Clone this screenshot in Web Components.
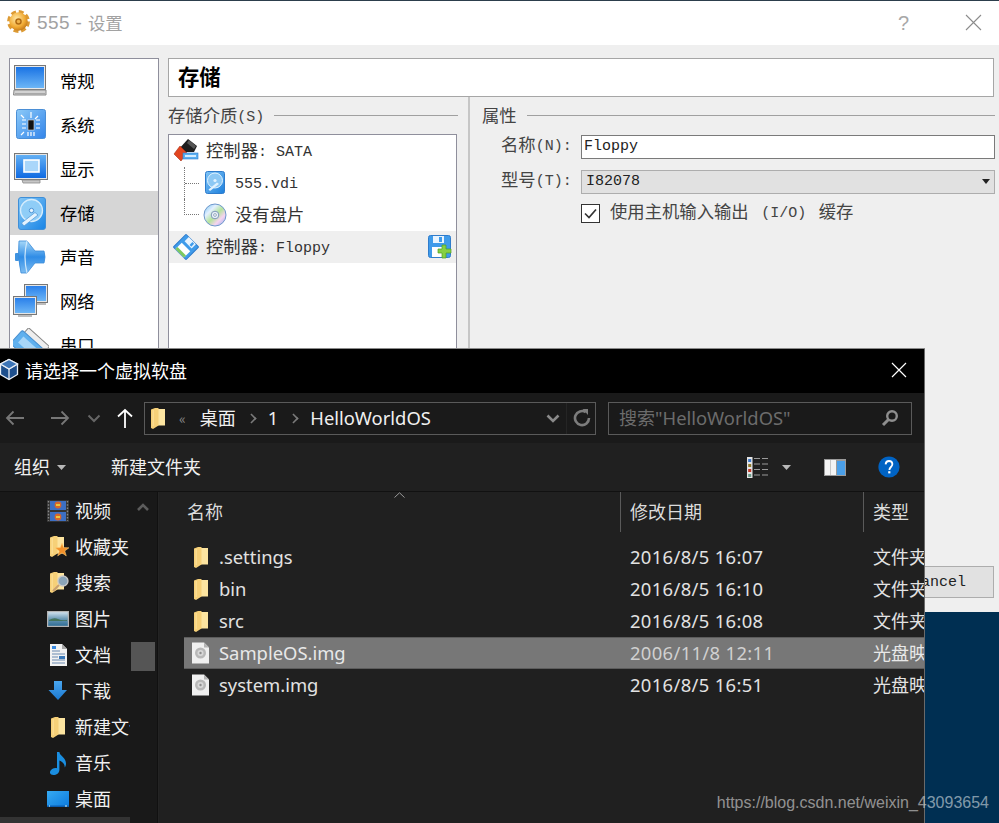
<!DOCTYPE html>
<html lang="zh">
<head>
<meta charset="utf-8">
<title>555 - 设置</title>
<style>
  html, body { margin: 0; height: 100%; overflow: hidden; background: #002f52; }
  body { position: relative; font-family: "Noto Sans CJK SC", sans-serif; text-autospace: no-autospace; }
</style>
</head>
<body>
<settings-window>
  <nav-item icon="laptop">常规</nav-item>
  <nav-item icon="chip">系统</nav-item>
  <nav-item icon="monitor">显示</nav-item>
  <nav-item icon="hdd" selected>存储</nav-item>
  <nav-item icon="speaker">声音</nav-item>
  <nav-item icon="network">网络</nav-item>
  <nav-item icon="serial">串口</nav-item>

  <tree-row slot="tree" icon="sata">控制器<mono-text>: SATA</mono-text></tree-row>
  <tree-row slot="tree" icon="vdi" child><mono-text>555.vdi</mono-text></tree-row>
  <tree-row slot="tree" icon="cd" child last>没有盘片</tree-row>
  <tree-row slot="tree" icon="floppy" selected action="floppyadd">控制器<mono-text>: Floppy</mono-text></tree-row>
</settings-window>

<file-dialog>
  <side-link icon="film">视频</side-link>
  <side-link icon="starfolder">收藏夹</side-link>
  <side-link icon="searchfolder">搜索</side-link>
  <side-link icon="picture">图片</side-link>
  <side-link icon="doc">文档</side-link>
  <side-link icon="download">下载</side-link>
  <side-link icon="folder">新建文件夹</side-link>
  <side-link icon="note">音乐</side-link>
  <side-link icon="desktop">桌面</side-link>

  <file-row slot="files" icon="folder" name=".settings" date="2016/8/5 16:07" type="文件夹"></file-row>
  <file-row slot="files" icon="folder" name="bin" date="2016/8/5 16:10" type="文件夹"></file-row>
  <file-row slot="files" icon="folder" name="src" date="2016/8/5 16:08" type="文件夹"></file-row>
  <file-row slot="files" icon="disc" name="SampleOS.img" date="2006/11/8 12:11" type="光盘映像文件" selected></file-row>
  <file-row slot="files" icon="disc" name="system.img" date="2016/8/5 16:51" type="光盘映像文件"></file-row>
</file-dialog>

<water-mark>https://blog.csdn.net/weixin_43093654</water-mark>

<script>
const folderShape = `
  <path d="M5 1h9v16.5H5z" fill="#fce4a0"/>
  <path d="M0 1.5 4 0h3.5v17.5L2 21 0 20z" fill="#f6d078"/>
  <path d="M1.5 2H3v16H1.5z" fill="#fbdc90"/>`;

// every icon is drawn on its own little canvas, sized to the reference
const ICONS = {
  gear: `<svg width="23" height="23" viewBox="0 0 24 24"><defs><radialGradient id="gg" cx=".4" cy=".35" r=".75"><stop offset="0" stop-color="#ffe8a6"/><stop offset=".6" stop-color="#f1aa33"/><stop offset="1" stop-color="#b46810"/></radialGradient></defs>
    <circle cx="12" cy="12" r="10" fill="none" stroke="#dc9a34" stroke-width="3.8" stroke-dasharray="5 2.85"/>
    <circle cx="12" cy="12" r="9.6" fill="url(#gg)"/>
    <circle cx="12" cy="12" r="3.4" fill="#b06a12"/><circle cx="12" cy="12" r="1.8" fill="#eeb24a"/></svg>`,
  laptop: `<svg width="36" height="32" viewBox="0 0 36 32"><defs><linearGradient id="lg" x2="0" y2="1"><stop offset="0" stop-color="#1a73e4"/><stop offset="1" stop-color="#6db6f6"/></linearGradient></defs>
    <rect x="1.5" y=".5" width="31" height="24" fill="#e8e8e8" stroke="#777"/><rect x="3" y="2" width="28" height="21" fill="url(#lg)"/>
    <path d="M1 25h32v5H.5z" fill="#d2d2d2" stroke="#8a8a8a"/><path d="M2 28h30v1.5H2z" fill="#a8a8a8"/></svg>`,
  chip: `<svg width="36" height="32" viewBox="0 0 36 32"><defs><linearGradient id="cg" x2="1" y2="1"><stop offset="0" stop-color="#8ccaf8"/><stop offset="1" stop-color="#3284ea"/></linearGradient></defs>
    <rect x="3.5" y=".5" width="29" height="29" rx="2" fill="url(#cg)" stroke="#4b8fd6"/>
    <rect x="15" y="11" width="6" height="10" fill="#111" stroke="#ddd" stroke-width=".6"/>
    <path d="M18 3v6M9 11h4M9 15h4M9 19h4M23 11h4M23 15h4M23 19h4M15 23v4M18 23v4M21 23v4M11 9l-3-3M25 7l-3 3M8 26l3-3" stroke="#fff" stroke-width="1.2"/></svg>`,
  monitor: `<svg width="36" height="32" viewBox="0 0 36 32"><defs><linearGradient id="mg" x2="0" y2="1"><stop offset="0" stop-color="#63b0f4"/><stop offset="1" stop-color="#0f6ae2"/></linearGradient></defs>
    <rect x="1.5" y=".5" width="33" height="26" fill="#e6e6e6" stroke="#777"/><rect x="3" y="2" width="30" height="23" fill="url(#mg)"/>
    <rect x="11" y="7" width="15" height="12" fill="#a9d6fa" stroke="#fff" stroke-width="1.6"/>
    <path d="M9 27h18v3H10z" fill="#c6c6c6" stroke="#8c8c8c" stroke-width=".8"/></svg>`,
  hdd: `<svg width="32" height="36" viewBox="0 0 32 36"><defs><linearGradient id="hg" x2="1" y2="1"><stop offset="0" stop-color="#86c8f6"/><stop offset="1" stop-color="#1784e6"/></linearGradient></defs>
    <rect x="3.5" y="2.5" width="27" height="32" rx="2.5" fill="url(#hg)" stroke="#3f8fd8"/>
    <circle cx="16.5" cy="15.5" r="11" fill="#8fcdf7" stroke="#d5ecfc" stroke-width="1.3"/>
    <circle cx="16.5" cy="15.5" r="2.2" fill="#e4f3fe" stroke="#4b93d6"/>
    <path d="M23 20 9 31l-2.5-3L20 17.5z" fill="#e4f3fe" stroke="#4b93d6" stroke-width=".7"/></svg>`,
  speaker: `<svg width="36" height="34" viewBox="0 0 36 34"><defs><linearGradient id="sg" x2="0" y2="1"><stop offset="0" stop-color="#a6d8f8"/><stop offset=".5" stop-color="#2f8ce6"/><stop offset="1" stop-color="#7dbdf2"/></linearGradient></defs>
    <rect x="2" y="13" width="4" height="8" rx="1" fill="#3f93e0"/>
    <path d="M6 1h8l8 10h9q2 6 0 12h-9L14 33H8Q4 17 6 1z" fill="url(#sg)" stroke="#3b8bd8" stroke-width=".8"/>
    <path d="M14 1q-4 16 0 32" fill="none" stroke="#cfe8fb" stroke-width="1.2"/></svg>`,
  network: `<svg width="36" height="34" viewBox="0 0 36 34"><defs><linearGradient id="ng" x2="0" y2="1"><stop offset="0" stop-color="#2a80ea"/><stop offset="1" stop-color="#6db6f6"/></linearGradient></defs>
    <rect x="11.5" y=".5" width="23" height="18" fill="#e6e6e6" stroke="#777"/><rect x="13" y="2" width="20" height="15" fill="url(#ng)"/>
    <path d="M24 19h9v2H24z" fill="#bdbdbd"/>
    <rect x=".5" y="12.5" width="23" height="18" fill="#e6e6e6" stroke="#777"/><rect x="2" y="14" width="20" height="15" fill="url(#ng)"/>
    <path d="M5 31h14v2H5z" fill="#bdbdbd"/></svg>`,
  serial: `<svg width="36" height="34" viewBox="0 0 36 34"><g transform="rotate(42 18 18)">
    <rect x="4" y="6" width="28" height="8" fill="#eee" stroke="#888"/><rect x="1" y="12" width="34" height="18" rx="2" fill="#5fb0ee" stroke="#4a90d0"/><rect x="6" y="16" width="24" height="8" fill="#a8d6f8"/></g></svg>`,

  sata: `<svg width="26" height="26" viewBox="0 0 26 26">
    <path d="M5 12 15 1l9 7-3 6H10z" fill="#1e1e1e"/><path d="M16 2l7 6-2 3-7-6z" fill="#555"/>
    <path d="M7 8l7 7-6 8-7-7z" fill="#e2451f" stroke="#a82c10" stroke-width=".6"/>
    <rect x="10" y="15" width="15" height="6" fill="#5aaef0" stroke="#2f7ccc" stroke-width=".6"/><rect x="12" y="17" width="11" height="2" fill="#d4ecff"/></svg>`,
  vdi: `<svg width="24" height="24" viewBox="0 0 24 24"><defs><linearGradient id="vg" x2="1" y2="1"><stop offset="0" stop-color="#7fc4f6"/><stop offset="1" stop-color="#1c7fdc"/></linearGradient></defs>
    <rect x="2.5" y=".5" width="19" height="22" rx="2" fill="url(#vg)" stroke="#2f7ccc"/>
    <circle cx="12" cy="9.5" r="7.5" fill="#8cc8f4" stroke="#e0f2ff"/><circle cx="12" cy="9.5" r="1.6" fill="#e0f2ff"/>
    <path d="M16 13 7 20l-1.5-1.5L14 11.5z" fill="#e0f2ff"/></svg>`,
  cd: `<svg width="24" height="24" viewBox="0 0 24 24"><defs><linearGradient id="dg" x2="1" y2="1"><stop offset="0" stop-color="#6fc2ee"/><stop offset=".3" stop-color="#e4f0ff"/><stop offset=".52" stop-color="#b4e49c"/><stop offset=".72" stop-color="#f6d4f0"/><stop offset="1" stop-color="#86a8ee"/></linearGradient></defs>
    <circle cx="12" cy="12" r="11" fill="url(#dg)" stroke="#6f98cc"/><circle cx="12" cy="12" r="3.8" fill="#e8f0f8" stroke="#7f98b8"/><circle cx="12" cy="12" r="1.4" fill="#fff" stroke="#5c7898" stroke-width=".6"/></svg>`,
  floppy: `<svg width="26" height="26" viewBox="0 0 26 26"><g transform="rotate(45 13 13)">
    <rect x="4" y="4" width="18" height="18" rx="1" fill="#3f9bea" stroke="#2f7ccc"/><rect x="8" y="4" width="10" height="6" fill="#e8f4ff"/><rect x="14" y="5" width="2.5" height="4" fill="#3f9bea"/>
    <rect x="7" y="13" width="12" height="9" fill="#fff"/><rect x="7" y="19" width="12" height="3" fill="#7cc860"/></g></svg>`,
  floppyadd: `<svg width="24" height="24" viewBox="0 0 24 24">
    <path d="M.5 2.5q0-2 2-2h18q2 0 2 2v18q0 2-2 2h-18q-2 0-2-2z" fill="#3f9bea" stroke="#2f7ccc"/>
    <rect x="5" y="1" width="11" height="7" fill="#e8f4ff"/><rect x="11" y="2" width="3" height="5" fill="#3f9bea"/><rect x="4" y="12" width="13" height="10" fill="#fff"/>
    <path d="M14 10h4v4h5v4h-5v5h-4v-5h-4v-4h4z" fill="#86d044" stroke="#4f9e22" stroke-width=".7"/></svg>`,

  cube: `<svg width="19" height="23" viewBox="0 0 19 23">
    <path d="M9 1.5 17.5 6v10.5L9 21.5.5 16.5V6z" fill="#1e4f8c" stroke="#e8eef6" stroke-width="1.3"/>
    <path d="M.5 6 9 11l8.5-5M9 11v10.5" fill="none" stroke="#e8eef6" stroke-width="1.3"/><path d="M9 1.5 17.5 6 9 11 .5 6z" fill="#3c75b8" stroke="#e8eef6" stroke-width="1.3"/></svg>`,
  back: `<svg width="20" height="16" viewBox="0 0 20 16"><path d="M19 8H2M8.5 1.5 2 8l6.5 6.5" fill="none" stroke="#777" stroke-width="1.8"/></svg>`,
  forward: `<svg width="20" height="16" viewBox="0 0 20 16"><path d="M1 8h17M11.5 1.5 18 8l-6.5 6.5" fill="none" stroke="#777" stroke-width="1.8"/></svg>`,
  chevdown: `<svg width="14" height="9" viewBox="0 0 14 9"><path d="M1.5 1.5 7 7l5.5-5.5" fill="none" stroke="#666" stroke-width="2"/></svg>`,
  chevdownb: `<svg width="14" height="9" viewBox="0 0 14 9"><path d="M1.5 1.5 7 7l5.5-5.5" fill="none" stroke="#8a8a8a" stroke-width="2.6"/></svg>`,
  up: `<svg width="16" height="20" viewBox="0 0 16 20"><path d="M8 20V2M1 8.5 8 2l7 6.5" fill="none" stroke="#fff" stroke-width="1.8"/></svg>`,
  refresh: `<svg width="18" height="18" viewBox="0 0 18 18"><path d="M12.8 3.2A7 7 0 1 0 16 9" fill="none" stroke="#7c7c7c" stroke-width="2.6"/><path d="M9.5 0H15v6z" fill="#7c7c7c"/></svg>`,
  glass: `<svg width="18" height="18" viewBox="0 0 18 18"><circle cx="11" cy="7" r="4.8" fill="none" stroke="#8e8e8e" stroke-width="2.4"/><path d="M7.5 10.5 2 16" stroke="#8e8e8e" stroke-width="3"/></svg>`,
  view: `<svg width="22" height="21" viewBox="0 0 22 21"><rect width="5.5" height="21" fill="#e4e4e4"/><rect x="1.2" y="2" width="3" height="3" fill="#3c78c8"/><rect x="1.2" y="7" width="3" height="3" fill="#8f7b2c"/><rect x="1.2" y="12" width="3" height="3" fill="#c03828"/><rect x="1.2" y="17" width="3" height="3" fill="#6a9a88"/>
    <path d="M7 1.5h6M15 1.5h6M7 7h6M15 7h6M7 12.5h6M15 12.5h6M7 18h6M15 18h6" stroke="#9a9a9a"/></svg>`,
  pane: `<svg width="22" height="17" viewBox="0 0 22 17"><rect width="22" height="17" fill="#9a9a9a"/><rect x="1" y="1" width="5" height="15" fill="#f4f4f4"/><rect x="6.5" y="1" width="5.5" height="15" fill="#f4f4f4"/><rect x="13" y="2" width="8" height="14" fill="#4a9fe8"/></svg>`,
  help: `<svg width="22" height="22" viewBox="0 0 22 22"><circle cx="11" cy="11" r="10.6" fill="#0063c4"/><path d="M7.6 8.4Q7.8 5 11 5t3.4 3c0 3-3 3-3 6" fill="none" stroke="#fff" stroke-width="1.8"/><rect x="10.2" y="15.2" width="2.2" height="2.2" fill="#fff"/></svg>`,
  carettiny: `<svg width="9" height="5" viewBox="0 0 9 5"><path d="M0 0h9L4.5 5z" fill="#b8b8b8"/></svg>`,
  sort: `<svg width="11" height="6" viewBox="0 0 11 6"><path d="M.5 5.5 5.5.8l5 4.7" fill="none" stroke="#9a9a9a"/></svg>`,
  scrollup: `<svg width="12" height="8" viewBox="0 0 12 8"><path d="M1 7 6 2l5 5" fill="none" stroke="#5c5c5c" stroke-width="2.6"/></svg>`,

  film: `<svg width="22" height="22" viewBox="0 0 22 22"><rect width="22" height="22" fill="#333"/><rect x="3" y="1" width="16" height="9" fill="#3d6fc4"/><rect x="3" y="12" width="16" height="9" fill="#3d6fc4"/>
    <circle cx="11" cy="5" r="3.4" fill="#d8662c"/><circle cx="11" cy="17" r="3.4" fill="#d8662c"/><rect x="9" y="4" width="4" height="2" fill="#e8c83e"/><rect x="9" y="16" width="4" height="2" fill="#e8c83e"/>
    <path d="M1.5 1v20M20.5 1v20" stroke="#888" stroke-width="1.4" stroke-dasharray="1.6 1.6"/></svg>`,
  folder: `<svg width="14" height="21" viewBox="0 0 14 21">${folderShape}</svg>`,
  starfolder: `<svg width="22" height="22" viewBox="0 0 22 22"><g transform="translate(3)">${folderShape}</g><path d="M13 6l1.7 4.6 5.3.2-4.2 3.1 1.5 5-4.3-3-4.3 3 1.5-5-4.2-3.1 5.3-.2z" transform="translate(2 1)" fill="#f2902a" stroke="#ffd27a" stroke-width=".5"/></svg>`,
  searchfolder: `<svg width="22" height="22" viewBox="0 0 22 22"><g transform="translate(3)">${folderShape}</g><circle cx="16" cy="9" r="5" fill="#8aa4b8" stroke="#c8c8c8" stroke-width="1.3"/><path d="M12 13 6 19" stroke="#c8a070" stroke-width="2.2"/></svg>`,
  picture: `<svg width="22" height="16" viewBox="0 0 22 16"><defs><linearGradient id="pg" x2="0" y2="1"><stop offset="0" stop-color="#d8e8f4"/><stop offset=".5" stop-color="#6a98b4"/><stop offset="1" stop-color="#2a6a94"/></linearGradient></defs><rect x=".5" y=".5" width="21" height="15" fill="url(#pg)" stroke="#b4b4b4" stroke-width="1.4"/><path d="M2 9q5-3 9-1t9 1v1H2z" fill="#44745c"/></svg>`,
  doc: `<svg width="17" height="22" viewBox="0 0 17 22"><path d="M0 0h12l5 5v17H0z" fill="#f2f2f2"/><path d="M12 0v5h5z" fill="#a8a8a8"/><path d="M2 7h8M2 10h13M2 13h6M2 16h13M2 19h13" stroke="#6a8ab0"/><rect x="9" y="12" width="6" height="3" fill="#3a78b8"/><rect x="2" y="2" width="4" height="3" fill="#3a8ae0"/></svg>`,
  download: `<svg width="20" height="20" viewBox="0 0 20 20"><defs><linearGradient id="wg" x2="0" y2="1"><stop offset="0" stop-color="#4aa6ee"/><stop offset="1" stop-color="#1a78d0"/></linearGradient></defs><path d="M6 0h8v9h5L10 19 .5 9H6z" fill="url(#wg)"/></svg>`,
  note: `<svg width="17" height="23" viewBox="0 0 17 23"><path d="M7 0h2.4c.4 4 6.6 5.5 6.6 11.5 0 1.6-.5 3-1.3 4 .3-4-3.2-6.2-5.3-7V18c0 3-3 5-6 5-2 0-3.5-1-3.5-2.6C0 18 3 16 5.5 16c.6 0 1.1.1 1.5.3z" fill="#1a8ee0"/></svg>`,
  desktop: `<svg width="22" height="16" viewBox="0 0 22 16"><defs><linearGradient id="eg" x2="1" y2="1"><stop offset="0" stop-color="#36aaf2"/><stop offset="1" stop-color="#0c7ade"/></linearGradient></defs><rect width="22" height="16" fill="url(#eg)"/><path d="M0 14.5h22V16H0z" fill="#0a5cb0"/><path d="M2 15h1M18 15h2" stroke="#dff"/></svg>`,
  disc: `<svg width="17" height="22" viewBox="0 0 17 22"><path d="M0 .5h12l5 5v16H0z" fill="#f0f0f0"/><path d="M12 .5v5h5z" fill="#b4b4b4"/><circle cx="8.5" cy="11" r="5.5" fill="#b8b8b8"/><circle cx="8.5" cy="11" r="3" fill="#d8d8d8"/><circle cx="8.5" cy="11" r="1.2" fill="#8e8e8e"/></svg>`,
};

// no whitespace before the slot: these sit inline next to CJK text
class MonoText extends HTMLElement {
  constructor() {
    super();
    this.attachShadow({mode: 'open'});
    this.shadowRoot.innerHTML = `<style>
        :host { display: inline; font-family: "Liberation Mono", monospace; font-size: 15px; vertical-align: 1px; }
        slot { white-space: pre; }
      </style><slot></slot>`;
  }
}
customElements.define('mono-text', MonoText);

class UiText extends HTMLElement {
  constructor() {
    super();
    this.attachShadow({mode: 'open'});
    this.shadowRoot.innerHTML = `<style>
        :host { display: inline; font-family: "Noto Sans", sans-serif; font-size: 18.4px; }
        slot { white-space: pre; }
      </style><slot></slot>`;
  }
}
customElements.define('ui-text', UiText);

class NavItem extends HTMLElement {
  constructor() {
    super();
    this.attachShadow({mode: 'open'});
    this.shadowRoot.innerHTML = `
      <style>
        :host {
          display: flex;
          align-items: center;
          height: 44px;
          color: #000;
          font-size: 17.33px;
        }
        :host([selected]) { background: #d6d6d6; }
        .icon { width: 38px; margin-left: 2px; margin-right: 10px; display: flex; justify-content: center; flex: none; }
        .text { padding-bottom: 2px; }
      </style>
      <span class="icon">${ICONS[this.getAttribute('icon')]}</span>
      <span class="text"><slot></slot></span>`;
  }
}
customElements.define('nav-item', NavItem);

class TreeRow extends HTMLElement {
  constructor() {
    super();
    this.attachShadow({mode: 'open'});
    const child = this.hasAttribute('child');
    const action = this.getAttribute('action');
    this.shadowRoot.innerHTML = `
      <style>
        :host {
          display: flex;
          align-items: center;
          position: relative;
          height: 32px;
          padding-left: ${child ? 34 : 4}px;
          padding-right: 4px;
          color: #333;
          font-size: 17.33px;
        }
        :host([selected]) { background: #efefef; }
        .icon { display: flex; flex: none; margin-right: ${child ? 8 : 7}px; }
        .text { white-space: nowrap; padding-bottom: 4px; }
        .action { display: flex; margin-left: auto; }
        .guide {
          position: absolute;
          left: 15px;
          top: 0;
          bottom: 0;
          width: 14px;
          border-left: 1px dotted #777;
        }
        :host([last]) .guide { bottom: 50%; border-bottom: 1px dotted #777; }
        .tick { position: absolute; left: 0; top: 50%; width: 14px; border-top: 1px dotted #777; }
      </style>
      ${child ? `<span class="guide">${this.hasAttribute('last') ? '' : '<span class="tick"></span>'}</span>` : ''}
      <span class="icon">${ICONS[this.getAttribute('icon')]}</span>
      <span class="text"><slot></slot></span>
      ${action ? `<span class="action">${ICONS[action]}</span>` : ''}`;
  }
}
customElements.define('tree-row', TreeRow);

class SettingsWindow extends HTMLElement {
  constructor() {
    super();
    this.attachShadow({mode: 'open'});
    this.shadowRoot.innerHTML = `
      <style>
        :host {
          position: absolute;
          left: 0;
          top: 0;
          width: 999px;
          height: 612px;
          display: flex;
          flex-direction: column;
          box-sizing: border-box;
          border-top: 1px solid #2c3e4c;
          background: #efefef;
          font-family: "Noto Sans CJK SC", sans-serif;
        }
        .title {
          height: 44px;
          flex: none;
          display: flex;
          align-items: center;
          background: #fff;
          padding-left: 7px;
          color: #a2a2a2;
          font-size: 17.33px;
        }
        .title .gear { display: flex; margin-right: 7px; margin-bottom: 4px; }
        .title .num { font-family: "Liberation Sans", sans-serif; font-size: 19px; white-space: pre; letter-spacing: .4px; }
        .title .name { margin-bottom: 2px; }
        .title .help { margin-left: auto; margin-right: 56px; font-family: "Liberation Sans", sans-serif; font-size: 20px; color: #a8a8a8; }
        .title svg.close { margin-right: 17px; margin-bottom: 2px; }
        .body { flex: 1; display: flex; min-height: 0; padding: 13px 4px 14px 9px; gap: 9px; }
        .nav {
          width: 148px;
          flex: none;
          border: 1px solid #8f8f9c;
          background: #fff;
        }
        .main { flex: 1; display: flex; flex-direction: column; min-width: 0; }
        .head {
          height: 39px;
          box-sizing: border-box;
          flex: none;
          margin-right: 1px;
          padding: 0 0 4px 9px;
          display: flex;
          align-items: center;
          border: 1px solid #a6a6a6;
          background: #fff;
          font-size: 21.33px;
          font-weight: 700;
          color: #000;
        }
        .panes { flex: 1; display: flex; min-height: 0; gap: 10px; }
        .pane { padding-top: 10px; display: flex; flex-direction: column; min-height: 0; }
        .pane.left { width: 290px; flex: none; }
        .pane.right { flex: 1; border-left: 2px solid #c6c6c6; padding-left: 12px; }
        .group { display: flex; align-items: center; gap: 10px; height: 17px; margin-bottom: 10px; color: #444; font-size: 17.33px; white-space: nowrap; }
        .group span { margin-bottom: 3px; }
        .group hr { flex: 1; height: 1px; margin: 0; border: 0; background: #a0a0a0; }
        .tree { flex: 1; margin-right: 1px; border: 1px solid #8f8f9c; background: #fff; }
        .form { display: grid; grid-template-columns: 80px 1fr; row-gap: 10px; padding-left: 19px; align-items: center; color: #444; font-size: 17.33px; line-height: 20px; }
        .label { white-space: nowrap; margin-bottom: 2px; }
        .input {
          height: 24px;
          box-sizing: border-box;
          border: 1px solid #7a7a7a;
          background: #fff;
          padding: 1px 0 0 2px;
          display: flex;
          align-items: center;
          color: #222;
        }
        .combo {
          height: 24px;
          box-sizing: border-box;
          border: 1px solid #adadad;
          background: #e1e1e1;
          padding: 0 4px;
          display: flex;
          align-items: center;
          justify-content: space-between;
          color: #222;
        }
        .combo i { width: 0; height: 0; border: 4px solid transparent; border-top: 5px solid #222; border-bottom: 0; }
        .check { grid-column: 2; display: flex; align-items: center; height: 19px; gap: 10px; word-spacing: 3.5px; white-space: nowrap; }
        .check .text { padding-bottom: 2px; }
        .box { width: 19px; height: 19px; box-sizing: border-box; border: 1px solid #333; background: #fff; display: flex; }
        .foot { flex: none; height: 32px; margin-top: 10px; display: flex; justify-content: flex-end; }
        .btn {
          width: 110px;
          margin-right: 1px;
          box-sizing: border-box;
          border: 1px solid #adadad;
          background: #e1e1e1;
          display: flex;
          align-items: center;
          justify-content: center;
          color: #222;
        }
      </style>
      <div class="title">
        <span class="gear">${ICONS.gear}</span>
        <span class="num">555 - </span><span class="name">设置</span>
        <span class="help">?</span>
        <svg class="close" width="17" height="17" viewBox="0 0 17 17"><path d="M1 1l15 15M16 1 1 16" stroke="#8c8c8c" stroke-width="1.1"/></svg>
      </div>
      <div class="body">
        <div class="nav"><slot></slot></div>
        <div class="main">
          <div class="head">存储</div>
          <div class="panes">
            <div class="pane left">
              <div class="group"><span>存储介质<mono-text>(S)</mono-text></span><hr></div>
              <div class="tree"><slot name="tree"></slot></div>
            </div>
            <div class="pane right">
              <div class="group"><span>属性</span><hr></div>
              <div class="form">
                <span class="label">名称<mono-text>(N):</mono-text></span>
                <div class="input"><mono-text>Floppy</mono-text></div>
                <span class="label">型号<mono-text>(T):</mono-text></span>
                <div class="combo"><mono-text>I82078</mono-text><i></i></div>
                <div class="check">
                  <span class="box"><svg width="17" height="17" viewBox="0 0 17 17"><path d="M3 8.5 7 12.5 14 4.5" fill="none" stroke="#333" stroke-width="1.7"/></svg></span>
                  <span class="text">使用主机输入输出<mono-text> (I/O) </mono-text>缓存</span>
                </div>
              </div>
            </div>
          </div>
          <div class="foot"><div class="btn"><mono-text>Cancel</mono-text></div></div>
        </div>
      </div>`;
  }
}
customElements.define('settings-window', SettingsWindow);

class SideLink extends HTMLElement {
  constructor() {
    super();
    this.attachShadow({mode: 'open'});
    this.shadowRoot.innerHTML = `
      <style>
        :host {
          display: flex;
          align-items: center;
          height: 36px;
          padding-left: 47px;
          color: #f0f0f0;
          font-size: 18px;
          white-space: nowrap;
        }
        .icon { width: 22px; margin-right: 6px; display: flex; justify-content: center; flex: none; }
        .text { padding-bottom: 2px; }
      </style>
      <span class="icon">${ICONS[this.getAttribute('icon')]}</span>
      <span class="text"><slot></slot></span>`;
  }
}
customElements.define('side-link', SideLink);

class FileRow extends HTMLElement {
  constructor() {
    super();
    this.attachShadow({mode: 'open'});
    this.shadowRoot.innerHTML = `
      <style>
        :host {
          display: grid;
          grid-template-columns: 436px 243px 1fr;
          align-items: center;
          height: 32px;
          box-sizing: border-box;
          margin-left: 25px;
          color: #e2e2e2;
          font-size: 18px;
          white-space: nowrap;
        }
        :host([selected]) { background: #777; border: 1px solid #5c5c5c; border-width: 1px 0; color: #e8e8e8; }
        .name { display: flex; align-items: center; padding-left: 8px; }
        .name ui-text { padding-bottom: 2px; }
        .icon { width: 17px; margin-right: 10px; display: flex; justify-content: center; flex: none; }
        .date { padding: 0 0 2px 10px; letter-spacing: .35px; }
        :host([selected]) .date { color: #d0d0d0; }
        .type { padding: 0 0 2px 10px; overflow: hidden; }
      </style>
      <span class="name"><span class="icon">${ICONS[this.getAttribute('icon')]}</span><ui-text>${this.getAttribute('name')}</ui-text></span>
      <span class="date"><ui-text>${this.getAttribute('date')}</ui-text></span>
      <span class="type">${this.getAttribute('type')}</span>`;
  }
}
customElements.define('file-row', FileRow);

class FileDialog extends HTMLElement {
  constructor() {
    super();
    this.attachShadow({mode: 'open'});
    this.shadowRoot.innerHTML = `
      <style>
        :host {
          position: absolute;
          left: 0;
          top: 349px;
          width: 925px;
          height: 474px;
          display: flex;
          flex-direction: column;
          box-sizing: border-box;
          border-right: 1px solid #6a6a6a;
          box-shadow: 0 -1px 0 #8a8a8a;
          background: #202020;
          overflow: hidden;
          color: #f0f0f0;
          font-family: "Noto Sans CJK SC", sans-serif;
          font-size: 18px;
        }
        .title { height: 44px; flex: none; display: flex; align-items: center; background: #000; color: #fff; }
        .title .cube { display: flex; margin-right: 6px; margin-bottom: 4px; }
        .title .name { padding-bottom: 2px; }
        .title svg.close { margin-left: auto; margin-right: 17px; margin-bottom: 2px; }
        .nav { height: 50px; flex: none; display: flex; align-items: center; background: #1a1a1a; padding-left: 5px; }
        .nav > span { display: flex; flex: none; }
        .addr, .search {
          height: 33px;
          box-sizing: border-box;
          border: 1px solid #5a5a5a;
          display: flex;
          align-items: center;
          flex: none;
        }
        .addr { width: 452px; margin-left: 11px; padding-left: 6px; white-space: nowrap; }
        .addr .seg { display: flex; align-items: center; }
        .addr .ang { color: #8a8a8a; font-size: 14px; margin: 0 14px 0 14px; }
        .addr .lbl { margin-bottom: 2px; }
        .addr .crumb { width: 9px; height: 9px; border: solid #7a7a7a; border-width: 2.5px 2.5px 0 0; transform: rotate(45deg) scale(.8); margin: 0 12px 0 11px; box-sizing: border-box; }
        .addr .tail { margin-left: auto; display: flex; align-items: center; height: 100%; }
        .addr .tail span { display: flex; align-items: center; height: 100%; }
        .addr .tail .c { padding: 0 6px 0 0; }
        .addr .tail .r { border-left: 1px solid #252525; padding: 0 4px 0 6px; }
        .search { width: 304px; margin-left: 12px; padding: 0 12px 0 10px; color: #6c6c6c; justify-content: space-between; white-space: nowrap; }
        .search .lbl { margin-bottom: 2px; }
        .tools { height: 48px; flex: none; display: flex; align-items: center; background: #202020; padding: 0 24px 0 14px; }
        .tools .lbl { margin-bottom: 2px; }
        .tools .caret { display: flex; margin-left: 7px; }
        .tools .new { margin-left: 45px; }
        .tools .right { margin-left: auto; display: flex; align-items: center; }
        .rest { flex: 1; display: flex; min-height: 0; border-top: 1px solid #111; }
        .side { width: 157px; flex: none; display: flex; background: #191919; border-right: 1px solid #111; }
        .links { width: 130px; flex: none; overflow: hidden; padding-top: 1px; display: flex; flex-direction: column; }
        .links .list { flex: 1; overflow: hidden; }
        .hbar { height: 6px; flex: none; background: #333; }
        .vbar { width: 24px; margin-left: 1px; display: flex; flex-direction: column; align-items: center; padding-top: 11px; }
        .vbar svg { display: block; }
        .thumb { width: 24px; height: 29px; margin-top: 131px; background: #555; }
        .main { flex: 1; min-width: 0; position: relative; background: #202020; border-left: 1px solid #242424; }
        .cols { display: grid; grid-template-columns: 461px 243px 1fr; height: 40px; color: #dcdcdc; margin-bottom: 9px; }
        .cols span { display: flex; align-items: center; padding-bottom: 3px; box-sizing: border-box; }
        .cols span:first-child { padding-left: 28px; }
        .cols span + span { border-left: 1px solid #5a5a5a; padding-left: 9px; }
        .sort { position: absolute; left: 235px; top: 0; display: flex; }
      </style>
      <div class="title">
        <span class="cube">${ICONS.cube}</span><span class="name">请选择一个虚拟软盘</span>
        <svg class="close" width="16" height="16" viewBox="0 0 16 16"><path d="M1 1l14 14M15 1 1 15" stroke="#fff" stroke-width="1.2"/></svg>
      </div>
      <div class="nav">
        <span>${ICONS.back}</span>
        <span style="margin-left:25px">${ICONS.forward}</span>
        <span style="margin-left:17px">${ICONS.chevdown}</span>
        <span style="margin-left:16px">${ICONS.up}</span>
        <div class="addr">
          <span class="seg">${ICONS.folder}</span>
          <span class="ang">«</span>
          <span class="lbl">桌面</span><i class="crumb"></i>
          <ui-text class="lbl">1</ui-text><i class="crumb"></i>
          <ui-text class="lbl">HelloWorldOS</ui-text>
          <span class="tail"><span class="c">${ICONS.chevdownb}</span><span class="r">${ICONS.refresh}</span></span>
        </div>
        <div class="search"><span class="lbl">搜索<ui-text>"HelloWorldOS"</ui-text></span>${ICONS.glass}</div>
      </div>
      <div class="tools">
        <span class="lbl">组织</span><span class="caret">${ICONS.carettiny}</span>
        <span class="new lbl">新建文件夹</span>
        <span class="right">
          ${ICONS.view}
          <span class="caret" style="margin:0 33px 0 13px">${ICONS.carettiny}</span>
          ${ICONS.pane}
          <span style="display:flex;margin-left:32px">${ICONS.help}</span>
        </span>
      </div>
      <div class="rest">
        <div class="side">
          <div class="links"><div class="list"><slot></slot></div><div class="hbar"></div></div>
          <div class="vbar">${ICONS.scrollup}<div class="thumb"></div></div>
        </div>
        <div class="main">
          <span class="sort">${ICONS.sort}</span>
          <div class="cols"><span>名称</span><span>修改日期</span><span>类型</span></div>
          <slot name="files"></slot>
        </div>
      </div>`;
  }
}
customElements.define('file-dialog', FileDialog);

class WaterMark extends HTMLElement {
  constructor() {
    super();
    this.attachShadow({mode: 'open'});
    this.shadowRoot.innerHTML = `
      <style>
        :host {
          position: absolute;
          right: 10px;
          top: 793px;
          color: rgba(255, 255, 255, .52);
          font: 16px/20px "Liberation Sans", sans-serif;
        }
      </style>
      <slot></slot>`;
  }
}
customElements.define('water-mark', WaterMark);
</script>
</body>
</html>
